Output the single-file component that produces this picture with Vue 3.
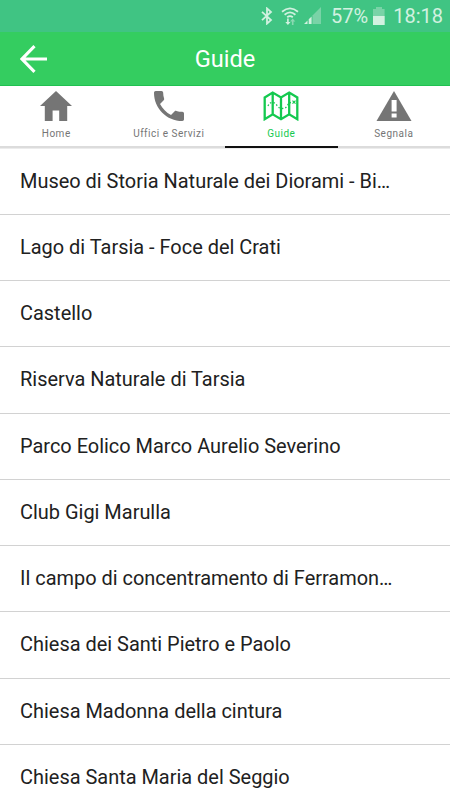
<script setup>
const tabs = [
  { id: 'home', label: 'Home' },
  { id: 'phone', label: 'Uffici e Servizi' },
  { id: 'map', label: 'Guide' },
  { id: 'alert', label: 'Segnala' },
]
const active = 'map'
const guides = [
  'Museo di Storia Naturale dei Diorami - Bi…',
  'Lago di Tarsia - Foce del Crati',
  'Castello',
  'Riserva Naturale di Tarsia',
  'Parco Eolico Marco Aurelio Severino',
  'Club Gigi Marulla',
  'Il campo di concentramento di Ferramon…',
  'Chiesa dei Santi Pietro e Paolo',
  'Chiesa Madonna della cintura',
  'Chiesa Santa Maria del Seggio',
]
</script>

<template>
  <div class="screen">
    <div class="status">
      <svg class="bt" width="12" height="18" viewBox="0 0 12 18">
        <path d="M1 4.8 10 13 6 16.6V1.4L10 5 1 13.2" fill="none" stroke="#d2f1e0" stroke-width="1.8" />
      </svg>
      <svg class="wifi" width="18" height="18" viewBox="0 0 18 18">
        <g fill="none" stroke="#d2f1e0" stroke-width="1.8">
          <path d="M1 4.8Q9 -2 17 4.8" />
          <path d="M3.6 7.7Q9 3 14.4 7.7" />
          <path d="M6.2 10.3Q9 8 11.8 10.3" />
        </g>
        <path d="M6.1 11.5h1.6V15h1.8l-2.6 3-2.6-3h1.8z" fill="#d2f1e0" />
        <path d="M10.9 18h1.6v-3.5h1.8l-2.6-3-2.6 3h1.8z" fill="#8bd8b2" />
      </svg>
      <svg class="signal" width="18" height="18" viewBox="0 0 18 18">
        <path d="M8.5 17V8.5L17 0v17z" fill="#79d3a7" />
        <path d="M0 17 3.5 13.5V17zM4.7 17v-4.7L7.6 9.4V17z" fill="#d2f1e0" />
      </svg>
      <span class="percent">57%</span>
      <svg class="battery" width="12" height="18" viewBox="0 0 12 18">
        <path d="M0 2h3V0h6v2h2.6v16H0z" fill="#79d3a7" />
        <path d="M0 9h11.6v9H0z" fill="#d2f1e0" />
      </svg>
      <span class="clock">18:18</span>
    </div>

    <header class="bar">
      <svg class="back" width="28" height="28" viewBox="0 0 28 28">
        <path d="M14.5 1.2 2 14l12.5 12.8M2 14h25" fill="none" stroke="#fff" stroke-width="3.1" />
      </svg>
      <h1>Guide</h1>
    </header>

    <nav class="tabs">
      <div v-for="tab in tabs" :key="tab.id" class="tab" :class="{ active: tab.id === active }">
        <svg v-if="tab.id === 'home'" width="32" height="30" viewBox="0 0 32 30">
          <path d="M16 0 32 15h-4.8v15h-8V19.5h-6.6V30H4.8V15H0z" fill="#757575" />
        </svg>
        <svg v-else-if="tab.id === 'phone'" width="30" height="30" viewBox="3 3 18 18">
          <path d="M6.62 10.79c1.44 2.83 3.76 5.14 6.59 6.59l2.2-2.2c.27-.27.67-.36 1.02-.24 1.12.37 2.33.57 3.57.57.55 0 1 .45 1 1V20c0 .55-.45 1-1 1-9.39 0-17-7.61-17-17 0-.55.45-1 1-1h3.5c.55 0 1 .45 1 1 0 1.25.2 2.45.57 3.57.11.35.03.74-.25 1.02l-2.2 2.2z" fill="#757575" />
        </svg>
        <svg v-else-if="tab.id === 'map'" width="36" height="30" viewBox="0 0 36 30">
          <g fill="none" stroke="#14c94f">
            <path d="M1.7 6.4 9.7 1.5 18 6.4l8.2-4.9 8.1 4.9v21.8l-8.1-4.9-8.2 4.9-8.3-4.9-8 4.9zM9.7 1.5v21.8M18 6.4v21.8M26.2 1.5v21.8" stroke-width="2.3" />
            <path d="M5 15q1.5-4 5-3.5 2.5.3 4 3Q16 17.5 19 17.5q4 0 5.5-3 1-2.500 3.5-3" stroke-width="1.3" stroke-dasharray="1.5 2" />
            <path d="M29.5 9.7l3 3M32.5 9.7l-3 3" stroke-width="1.2" />
          </g>
        </svg>
        <svg v-else width="36" height="30" viewBox="0 0 36 30">
          <path d="M18 0 35.5 30H.5z" fill="#757575" />
          <path d="M15.6 9h5v11.5h-5zM15.6 22.5h5v4h-5z" fill="#fff" />
        </svg>
        <span>{{ tab.label }}</span>
      </div>
    </nav>

    <ul class="list">
      <li v-for="name in guides" :key="name">{{ name }}</li>
    </ul>
  </div>
</template>

<style>
body {
  margin: 0;
  overflow: hidden;
}
</style>

<style scoped>
.screen {
  width: 450px;
  height: 800px;
  overflow: hidden;
  background: #fff;
  font-family: Roboto, sans-serif;
}
.status {
  height: 32px;
  box-sizing: border-box;
  padding-right: 7px;
  display: flex;
  justify-content: flex-end;
  align-items: center;
  background: #40c483;
  color: #d2f1e0;
  font-size: 20px;
  line-height: 32px;
}
.status svg {
  flex: none;
}
.wifi {
  margin-left: 8px;
}
.signal {
  margin-left: 5px;
}
.percent {
  margin-left: 9px;
}
.battery {
  margin-left: 5px;
}
.clock {
  margin-left: 8px;
}
.bar {
  height: 54px;
  box-sizing: border-box;
  padding: 0 20px;
  display: grid;
  grid-template-columns: 28px 1fr 28px;
  align-items: center;
  background: #34cd60;
  border-bottom: 1px solid #1fc150;
}
h1 {
  margin: 0;
  color: #fff;
  font-size: 23.6px;
  font-weight: 400;
  line-height: 52px;
  text-align: center;
}
.tabs {
  height: 63px;
  box-sizing: border-box;
  display: grid;
  grid-template-columns: repeat(4, 1fr);
  border-bottom: 1px solid #ececec;
}
.tab {
  box-sizing: border-box;
  padding-top: 5px;
  display: flex;
  flex-direction: column;
  align-items: center;
  border-bottom: 2px solid #dcdcdc;
  color: #757575;
  font-size: 10px;
  line-height: 14px;
  letter-spacing: 0.5px;
}
.tab span {
  margin-top: 6px;
}
.active {
  color: #14c94f;
  border-bottom-color: #111;
}
.list {
  margin: -0.3px 0 0;
  padding: 0;
  list-style: none;
}
li {
  height: 66.25px;
  box-sizing: border-box;
  padding: 0 20px;
  border-bottom: 1px solid #d2d2d2;
  color: #212121;
  font-size: 19.95px;
  line-height: 64px;
  white-space: nowrap;
}
</style>
